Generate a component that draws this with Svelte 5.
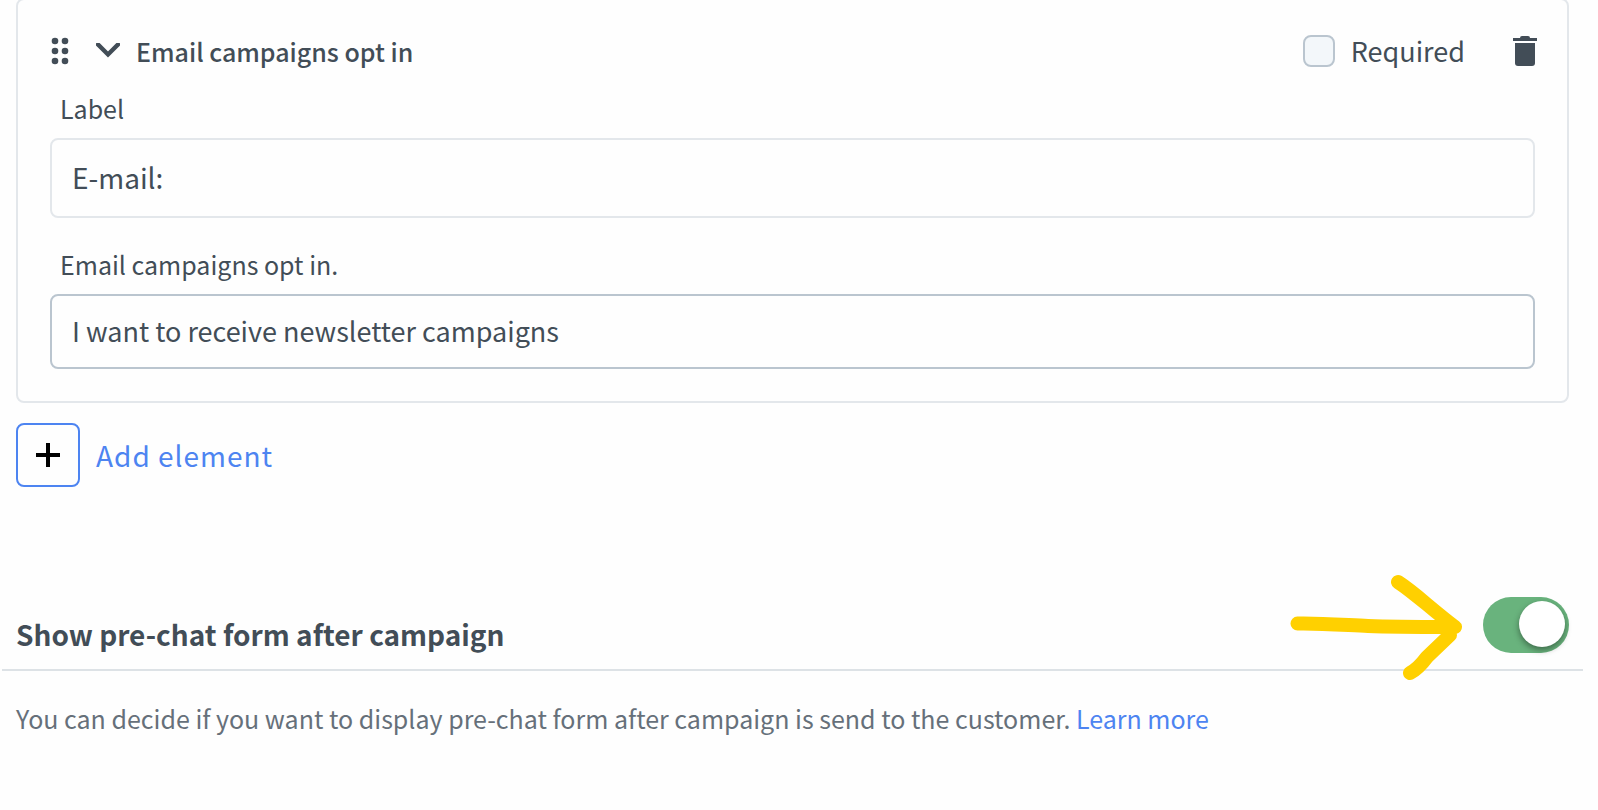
<script>
  let required = $state(false);
  let open = $state(true);
  let showAfterCampaign = $state(true);
  let label = $state("E-mail:");
  let optIn = $state("I want to receive newsletter campaigns");
</script>

<main>
  <section class="card">
    <header>
      <button class="icon drag" aria-label="Move element">
        <svg width="18" height="28" viewBox="0 0 18 28">
          {#each [4, 14, 24] as y}
            <circle cx="4" cy={y} r="3.3" />
            <circle cx="14" cy={y} r="3.3" />
          {/each}
        </svg>
      </button>
      <button
        class="icon chevron"
        aria-label="Toggle details"
        aria-expanded={open}
        onclick={() => (open = !open)}>
        <svg width="24" height="16" viewBox="0 0 24 16">
          <path
            d="M2 1.500 L12 11.500 L22 1.500"
            fill="none"
            stroke="currentColor"
            stroke-width="4.400"
            stroke-linecap="round" />
        </svg>
      </button>
      <h2>Email campaigns opt in</h2>
      <label class="required">
        <input type="checkbox" bind:checked={required} />
        Required
      </label>
      <button class="icon" aria-label="Delete element">
        <svg width="24" height="30" viewBox="0 0 24 30">
          <path d="M0 2h7q0-2 2-2h6q2 0 2 2h7v3H0z" />
          <path d="M2 7h20v20q0 3-3 3H5q-3 0-3-3z" />
        </svg>
      </button>
    </header>
    {#if open}
      <div class="field">
        <label for="label">Label</label>
        <input id="label" class="large" type="text" bind:value={label} />
      </div>
      <div class="field">
        <label for="opt-in">Email campaigns opt in.</label>
        <input id="opt-in" class="strong" type="text" bind:value={optIn} />
      </div>
    {/if}
  </section>

  <button class="add">
    <span class="plus">
      <svg width="24" height="24" viewBox="0 0 24 24">
        <path d="M10 0h4v10h10v4H14v10h-4V14H0v-4h10z" />
      </svg>
    </span>
    Add element
  </button>

  <section class="campaign">
    <div class="row">
      <h1><label for="after">Show pre-chat form after campaign</label></h1>
      <input
        id="after"
        class="switch"
        type="checkbox"
        role="switch"
        bind:checked={showAfterCampaign} />
      <svg class="arrow" width="174" height="108" viewBox="0 0 174 108" aria-hidden="true">
        <path
          d="M7.500 49.500C30 49 55 51 78 52C104 53 128 53 158 53M108 8C125 19 140 34 165 53M160 61L137 83Q128 95 120 99" />
      </svg>
    </div>
    <p>
      You can decide if you want to display pre-chat form after campaign is
      send to the customer. <a href="#learn-more">Learn more</a>
    </p>
  </section>
</main>

<style>
  :global(body) {
    margin: 0;
    background: #fefefe;
  }
  main {
    font-family: "Noto Sans CJK SC", "Open Sans", sans-serif;
    color: #424d57;
    overflow: hidden;
  }
  button,
  input {
    font-family: inherit;
    color: inherit;
    margin: 0;
  }
  button {
    border: 0;
    padding: 0;
    background: none;
    cursor: pointer;
  }
  svg {
    display: block;
    fill: currentColor;
  }
  .card {
    box-sizing: border-box;
    margin: -2px 29px 0 16px;
    padding: 32px;
    border: 2px solid #e3e7eb;
    border-radius: 8px;
  }
  header {
    display: flex;
    align-items: center;
    height: 38px;
    margin-right: -2px;
  }
  .drag {
    margin-left: 1px;
  }
  .chevron {
    margin: 0 16px 0 27px;
  }
  h2 {
    flex: 1;
    margin: 0;
    font-size: 25px;
    line-height: 36px;
    font-weight: 500;
  }
  .required {
    display: flex;
    align-items: center;
    gap: 16px;
    margin-right: 48px;
    font-size: 27px;
    line-height: 38px;
  }
  .required input {
    appearance: none;
    box-sizing: border-box;
    width: 32px;
    height: 32px;
    border: 2px solid #bac5cf;
    border-radius: 8px;
    background: #f3f7fa;
  }
  .required input:checked {
    background: #4d84f1;
  }
  .field {
    display: flex;
    flex-direction: column;
  }
  .field label {
    padding: 18px 10px 10px;
    font-size: 25px;
    line-height: 40px;
  }
  .field + .field label {
    padding-top: 26px;
  }
  .field input {
    box-sizing: border-box;
    width: 100%;
    height: 75px;
    padding: 0 20px 3px;
    border: 2px solid #e3e7eb;
    border-radius: 8px;
    background: #fefefe;
    font-size: 27px;
  }
  .field .large {
    height: 80px;
    font-size: 28px;
  }
  .field .strong {
    border-color: #bac5cf;
  }
  .add {
    display: flex;
    align-items: center;
    gap: 16px;
    margin: 20px 0 0 16px;
    color: #4d84f1;
    font-size: 28px;
    letter-spacing: 1px;
  }
  .plus {
    box-sizing: border-box;
    display: grid;
    place-items: center;
    width: 64px;
    height: 64px;
    border: 2px solid #4d84f1;
    border-radius: 8px;
    color: #000;
  }
  .campaign {
    margin: 110px 15px 0 2px;
  }
  .row {
    position: relative;
    display: flex;
    justify-content: space-between;
    align-items: flex-start;
    padding: 0 14px 15px;
    border-bottom: 2px solid #dde2e6;
  }
  h1 {
    margin: 17px 0 0;
    font-size: 28px;
    line-height: 40px;
    font-weight: 600;
  }
  .switch {
    appearance: none;
    box-sizing: border-box;
    width: 86px;
    height: 56px;
    padding: 4px;
    border-radius: 28px;
    background: #bac5cf;
    cursor: pointer;
  }
  .switch::before {
    content: "";
    display: block;
    width: 46px;
    height: 46px;
    border-radius: 50%;
    background: #fff;
    box-shadow: 0 3px 6px rgba(0, 0, 0, 0.4);
  }
  .switch:checked {
    background: #69b37d;
  }
  .switch:checked::before {
    margin-left: auto;
  }
  .arrow {
    position: absolute;
    right: 119px;
    bottom: -13px;
    fill: none;
    stroke: #ffd000;
    stroke-width: 14;
    stroke-linecap: round;
    stroke-linejoin: round;
  }
  p {
    margin: 27px 14px;
    color: #66707a;
    font-size: 25px;
    line-height: 40px;
  }
  a {
    color: #4d84f1;
    text-decoration: none;
  }
</style>
